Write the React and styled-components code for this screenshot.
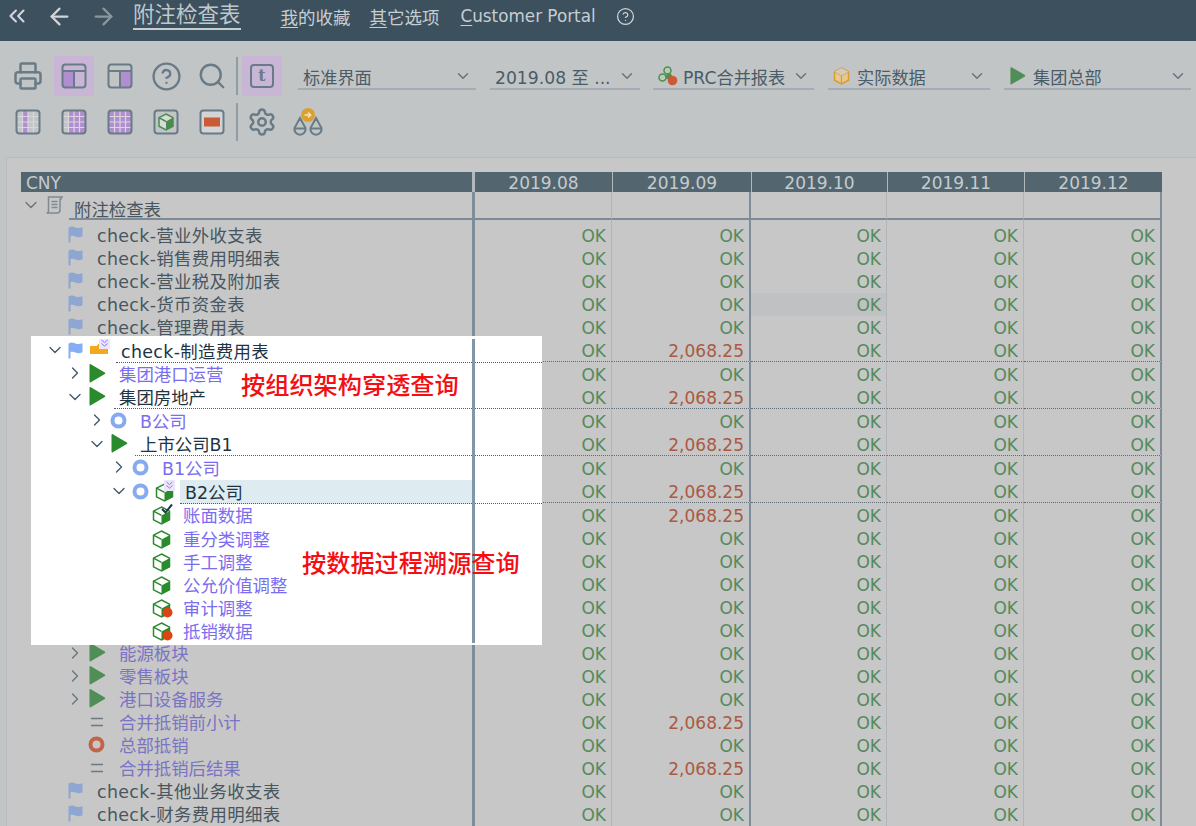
import React from "react";
import styled, { createGlobalStyle } from "styled-components";
import {
  ArrowLeft,
  ArrowRight,
  ChevronDown,
  ChevronRight,
  ChevronsLeft,
  CircleHelp,
  Printer,
  Search,
  Settings,
} from "lucide-react";

const FONT = `"DejaVu Sans", "Noto Sans CJK SC", sans-serif`;
const SLATE = "#687b87";

const GlobalStyle = createGlobalStyle`
  html, body {
    margin: 0;
    height: 100%;
    overflow: hidden;
    background: #c2c5c6;
    font-family: ${FONT};
  }
  * { box-sizing: border-box; }
`;

const Page = styled.div`
  width: 1196px;
  height: 826px;
  overflow: hidden;
  display: flex;
  flex-direction: column;
`;

/* top bar */
const TopBar = styled.div`
  height: 41px;
  flex: none;
  background: #3c505d;
  display: flex;
  align-items: center;
  color: #c6ced2;
  font-size: 17.5px;
  padding: 0 0 9px 4px;
`;

const NavIcon = styled.span`
  display: flex;
  width: ${(p) => p.$w}px;
  color: ${(p) => p.$color || "#cfd5d8"};
`;

const Title = styled.span`
  font-size: 21.5px;
  line-height: 26px;
  margin: 0 40px -4px 0;
  border-bottom: 2px solid #c6ced2;
  color: #bfc8cd;
  transform: translateY(-2px);
`;

const NavLink = styled.span`
  margin-right: ${(p) => p.$gap}px;
  font-size: ${(p) => p.$size || 17.5}px;
  white-space: nowrap;
  u { text-underline-offset: 3px; }
`;

/* toolbar */
const Toolbar = styled.div`
  height: 116px;
  flex: none;
  padding: 15px 0 0 8px;
  display: flex;
  flex-direction: column;
  gap: 6px;
`;

const ToolRow = styled.div`
  display: flex;
  align-items: center;
  gap: 6px;
  height: 40px;
`;

const ToolButton = styled.div`
  width: 40px;
  height: 40px;
  border-radius: 2px;
  display: flex;
  align-items: center;
  justify-content: center;
  color: ${SLATE};
  background: ${(p) => (p.$active ? "#c9b6d6" : "transparent")};
`;

const ToolDivider = styled.div`
  width: 2px;
  height: 38px;
  margin: 0 -2px;
  background: #8f9ca6;
`;

const LetterBox = styled.span`
  width: 24px;
  height: 24px;
  border: 2px solid ${SLATE};
  border-radius: 4px;
  display: flex;
  align-items: center;
  justify-content: center;
  font: bold 16px/1 "DejaVu Serif", serif;
  color: ${SLATE};
`;

const Select = styled.div`
  width: ${(p) => p.$w}px;
  margin-left: ${(p) => p.$ml}px;
  height: 26px;
  align-self: flex-start;
  margin-top: 8px;
  border-bottom: 2px solid #a6abb5;
  display: flex;
  align-items: center;
  padding: 0 4px 0 5px;
  color: #4a5c68;
  font-size: 17.2px;
  white-space: nowrap;
  svg { flex: none; }
`;

const SelectText = styled.span`
  flex: 1;
  margin-left: ${(p) => p.$ml || 0}px;
`;

/* report panel */
const Panel = styled.div`
  flex: 1;
  margin-left: 6px;
  padding: 14px 0 0 14px;
  background: #c7c7c7;
  border-top: 1px solid #b8bcbd;
  border-left: 1px solid #b8bcbd;
`;

const Table = styled.div`
  position: relative;
  width: 1141px;
`;

const GRID = "451px 140px 139px 136px 137px 138px";

const HeadRow = styled.div`
  display: grid;
  grid-template-columns: ${GRID};
  height: 20px;
  background: #536670;
  color: #c5cbce;
  font-size: 17px;
  line-height: 23px;
`;

const HeadCell = styled.div`
  padding-left: ${(p) => (p.$first ? 5 : 0)}px;
  text-align: ${(p) => (p.$first ? "left" : "center")};
  border-left: ${(p) => (p.$first ? "none" : "3px solid #b3b8bc")};
  overflow: hidden;
  & + & + & { border-left-width: 1px; }
`;

const Row = styled.div`
  display: grid;
  grid-template-columns: ${GRID};
  height: ${(p) => p.$h}px;
`;

const TreeCell = styled.div`
  display: flex;
  align-items: stretch;
  padding-left: ${(p) => p.$pad}px;
  color: ${(p) => p.$color};
  font-size: 17.4px;
  line-height: 19px;
  white-space: nowrap;
  min-width: 0;
`;

const Twisty = styled.span`
  width: 20px;
  flex: none;
  display: flex;
  align-items: center;
  padding-bottom: 2px;
  color: ${(p) => (p.$bright ? "#42586a" : "#67767f")};
  svg { margin-left: -3px; }
`;

const Slot = styled.span`
  width: ${(p) => p.$w}px;
  flex: none;
  display: flex;
  align-items: center;
  padding-bottom: 2px;
`;

const Label = styled.span`
  flex: 1;
  display: flex;
  align-items: flex-end;
  padding-left: 5px;
  padding-bottom: ${(p) => (p.$head || p.$open ? 0 : 1)}px;
  line-height: ${(p) => (p.$head ? 15 : 19)}px;
  letter-spacing: ${(p) => (p.$latin ? 0.35 : 0)}px;
  background: ${(p) => (p.$selected ? "#deebf0" : "transparent")};
  border-bottom: ${(p) =>
    p.$head ? "2px solid #7d8a95" : p.$open ? "1px dotted #4c5c6a" : "none"};
`;

const ValueCell = styled.div`
  display: flex;
  align-items: flex-end;
  justify-content: flex-end;
  padding: 0 5px ${(p) => (p.$open ? 0 : 1)}px 0;
  font-size: 17px;
  line-height: 19px;
  color: ${(p) => (p.$alert ? "#aa5a42" : "#558b5c")};
  background: ${(p) => (p.$shade ? "#bfc1c3" : "transparent")};
  border-left: ${(p) => (p.$first ? "3px solid #7d8d99" : "none")};
  border-right: ${(p) => (p.$strong ? "2px solid #7d8d99" : "1px solid #b0b5ba")};
  border-bottom: ${(p) =>
    p.$rule ? "2px solid #7d8a95" : p.$open ? "1px dotted #5e6c78" : "none"};
`;

/* the white call-out over the tree column */
const Callout = styled.div`
  position: absolute;
  top: 164px;
  left: 10px;
  width: 511px;
  height: 309px;
  padding-top: 3px;
  background: #fff;
`;

const CalloutRow = styled.div`
  display: grid;
  grid-template-columns: 441px 3px 1fr;
  height: ${(p) => p.$h}px;
`;

const CalloutBar = styled.div`
  background: #8097a9;
`;

const CalloutRest = styled.div`
  border-bottom: ${(p) => (p.$open ? "1px dotted #4c5c6a" : "none")};
`;

const Note = styled.span`
  position: absolute;
  left: ${(p) => p.$x}px;
  top: ${(p) => p.$y}px;
  color: #f50d12;
  font-size: 24.2px;
  line-height: 30px;
  font-weight: 500;
  white-space: nowrap;
`;

/* drawn icons */
const LayoutIcon = ({ side }) => (
  <svg width="26" height="26" viewBox="0 0 26 26" fill="none">
    <rect x={side === "left" ? 2 : 13} y="8" width="11" height="16" fill="#b18ed0" />
    <rect x="1.5" y="1.5" width="23" height="23" rx="3" stroke={SLATE} strokeWidth="2" />
    <path d="M2 8h22M13 8v16" stroke={SLATE} strokeWidth="2" />
  </svg>
);

const GridIcon = ({ cols }) => (
  <svg width="26" height="26" viewBox="0 0 26 26" fill="none">
    {cols.map((c) => (
      <rect key={c} x={2 + c * 5.5} y="2" width="5.5" height="22" fill="#b18ed0" />
    ))}
    <path d="M7.5 2v22M13 2v22M18.5 2v22M2 7.5h22M2 13h22M2 18.5h22" stroke="#dad6de" strokeWidth="1.2" />
    <rect x="1.5" y="1.5" width="23" height="23" rx="3" stroke={SLATE} strokeWidth="2" />
  </svg>
);

const BoxedCube = () => (
  <svg width="26" height="26" viewBox="0 0 26 26" fill="none">
    <rect x="1.5" y="1.5" width="23" height="23" rx="3" stroke={SLATE} strokeWidth="2" />
    <path d="M13 5l7 3.6v8.6L13 21l-7-3.800V8.600z" fill="#d8dcd8" stroke="#4a8c50" strokeWidth="1.5" />
    <path d="M13 12.500l7-3.900v8.600L13 21z" fill="#4a8c50" />
    <path d="M6 8.600l7 3.900" stroke="#4a8c50" strokeWidth="1.5" />
  </svg>
);

const BoxedBar = () => (
  <svg width="26" height="26" viewBox="0 0 26 26" fill="none">
    <rect x="1.5" y="1.5" width="23" height="23" rx="3" stroke={SLATE} strokeWidth="2" fill="#d2d4d5" />
    <rect x="5" y="8.500" width="16" height="9" fill="#c95b36" />
  </svg>
);

const Scales = () => (
  <svg width="32" height="30" viewBox="0 0 32 30" fill="none">
    <path d="M8 11L2.500 21a5.600 5.600 0 1 0 11 0zM24 11l-5.500 10a5.600 5.600 0 1 0 11 0z" stroke={SLATE} strokeWidth="2" />
    <path d="M2.500 21.500h11M18.500 21.500h11" stroke={SLATE} strokeWidth="2" />
    <circle cx="16" cy="8" r="7" fill="#dba033" />
    <path d="M12.500 8h6M16 5.500L18.700 8 16 10.500" stroke="#f2e3b8" strokeWidth="1.500" />
  </svg>
);

const Flag = ({ bright }) => (
  <svg width="15" height="17" viewBox="0 0 15 17">
    <path
      d="M0.500 1.500c3-1.500 4.500-1 7 0s4.500 0.500 7-0.200v9c-2.500 1-4.500 1.200-7 0.200s-3.500-1-5-0.500V16.500H0.500z"
      fill={bright ? "#86aef6" : "#8ea6d2"}
    />
  </svg>
);

const Play = ({ bright, size = 18 }) => (
  <svg width={size} height={size + 1} viewBox="0 0 18 19">
    <path
      d="M1.500 1c0-.8.700-1.100 1.300-.7l14 8.200c.6.400.6 1.200 0 1.600l-14 8.200c-.6.400-1.300.1-1.300-.7z"
      fill={bright ? "#2a8a2e" : "#4f8e56"}
    />
  </svg>
);

const Ring = ({ color }) => (
  <svg width="17" height="17" viewBox="0 0 17 17">
    <circle cx="8.500" cy="8.500" r="6" fill="none" stroke={color} strokeWidth="4" />
  </svg>
);

const Equals = () => (
  <svg width="16" height="12" viewBox="0 0 16 12">
    <path d="M3 2.500h12M3 9.500h12" stroke="#6c7a85" strokeWidth="1.600" />
  </svg>
);

const Badge = ({ x = 9, y = 0 }) => (
  <g transform={`translate(${x} ${y})`}>
    <rect width="11" height="11" fill="#ebe6fa" />
    <path d="M2.500 2l3 2.600 3-2.600M2.500 5.500l3 2.600 3-2.600" fill="none" stroke="#8a78e8" strokeWidth="1" />
  </g>
);

const Cube = ({ mark, color = "#2a8a2e" }) => (
  <svg width="24" height="22" viewBox="0 0 24 22">
    <path d="M9.500 4l8 4.200v8.600L9.500 21l-8-4.200V8.200z" fill="#fff" stroke={color} strokeWidth="1.500" />
    <path d="M9.500 12.400l8-4.200v8.600L9.500 21z" fill={color} />
    <path d="M1.500 8.200l8 4.200" stroke={color} strokeWidth="1.500" />
    {mark === "badge" && <Badge />}
    {mark === "dot" && <circle cx="15.500" cy="16.500" r="5" fill="#dd4413" />}
    {mark === "check" && <path d="M10 6l3.500 3.500L20 1.500" fill="none" stroke="#203a4a" strokeWidth="2" />}
  </svg>
);

const SmallCube = () => (
  <svg width="17" height="18" viewBox="0 0 17 18">
    <path d="M8.500 1l7 3.800v8.400l-7 3.800-7-3.800V4.800z" fill="#e6c98e" stroke="#d99c30" strokeWidth="1.500" />
    <path d="M1.500 4.800l7 3.800 7-3.800M8.500 8.600V17" fill="none" stroke="#d99c30" strokeWidth="1.200" />
    <path d="M8.500 1l7 3.800-7 3.800-7-3.800z" fill="#cfcbc2" />
  </svg>
);

const Cluster = () => (
  <svg width="20" height="20" viewBox="0 0 20 20">
    <circle cx="9.500" cy="4.500" r="3.500" fill="#b9cdb4" stroke="#4f8e56" strokeWidth="1.500" />
    <circle cx="4.500" cy="11.500" r="3.500" fill="#b9cdb4" stroke="#4f8e56" strokeWidth="1.500" />
    <circle cx="11" cy="10.500" r="3" fill="#4f8e56" />
    <circle cx="14.500" cy="14.500" r="4.800" fill="#c95b36" />
  </svg>
);

const Folder = () => (
  <svg width="24" height="22" viewBox="0 0 24 22">
    <path d="M0 7h7l1-2h10v10H0z" fill="#f4a81c" />
    <Badge y={-1} />
  </svg>
);

const Ledger = () => (
  <svg width="20" height="20" viewBox="0 0 20 20" fill="none" stroke="#7d8a92" strokeWidth="1.500">
    <path d="M5 2h13l-1.500 2.500H16V15a3 3 0 0 1-3 3H2.500a2 2 0 0 0 2-2V2z" />
    <path d="M7.500 6.500h6M7.500 9.500h6M7.500 12.500h6" />
  </svg>
);

const DIM_TEXT = "#47565f";
const DIM_LINK = "#7b73c4";
const BRIGHT_TEXT = "#1d3443";
const BRIGHT_LINK = "#7a6df0";
const DOT_RED = "#c0654a";
const DOT_BLUE = "#86aaf0";

const flagSlot = (
  <Slot $w={24}>
    <Flag />
  </Slot>
);
const playSlot = (
  <Slot $w={26}>
    <Play />
  </Slot>
);
const equalsSlot = (
  <Slot $w={26}>
    <Equals />
  </Slot>
);

const tableRows = [
  { label: "check-营业外收支表", pad: 27, icons: flagSlot },
  { label: "check-销售费用明细表", pad: 27, icons: flagSlot },
  { label: "check-营业税及附加表", pad: 27, icons: flagSlot },
  { label: "check-货币资金表", pad: 27, icons: flagSlot, shade: 2 },
  { label: "check-管理费用表", pad: 27, icons: flagSlot },
  { hidden: true, open: true, amount: true },
  { hidden: true },
  { hidden: true, open: true, amount: true },
  { hidden: true },
  { hidden: true, open: true, amount: true },
  { hidden: true },
  { hidden: true, open: true, amount: true },
  { hidden: true, amount: true },
  { hidden: true },
  { hidden: true },
  { hidden: true },
  { hidden: true },
  { hidden: true },
  { label: "能源板块", pad: 47, icons: playSlot, branch: true, link: true },
  { label: "零售板块", pad: 47, icons: playSlot, branch: true, link: true },
  { label: "港口设备服务", pad: 47, icons: playSlot, branch: true, link: true },
  { label: "合并抵销前小计", pad: 47, link: true, amount: true, icons: equalsSlot },
  {
    label: "总部抵销",
    pad: 47,
    link: true,
    icons: (
      <Slot $w={26}>
        <Ring color={DOT_RED} />
      </Slot>
    ),
  },
  { label: "合并抵销后结果", pad: 47, link: true, amount: true, icons: equalsSlot },
  { label: "check-其他业务收支表", pad: 27, icons: flagSlot },
  { label: "check-财务费用明细表", pad: 27, icons: flagSlot },
];

const blueRing = (
  <Slot $w={25}>
    <Ring color={DOT_BLUE} />
  </Slot>
);
const brightPlay = (w) => (
  <Slot $w={w}>
    <Play bright />
  </Slot>
);
const leaf = (mark) => (
  <Slot $w={26}>
    <Cube mark={mark} />
  </Slot>
);

const calloutRows = [
  {
    label: "check-制造费用表",
    pad: 17,
    twisty: "down",
    open: true,
    icons: (
      <>
        <Slot $w={22}>
          <Flag bright />
        </Slot>
        <Slot $w={26}>
          <Folder />
        </Slot>
      </>
    ),
  },
  { label: "集团港口运营", pad: 37, twisty: "right", link: true, icons: brightPlay(26) },
  { label: "集团房地产", pad: 37, twisty: "down", open: true, icons: brightPlay(26) },
  { label: "B公司", pad: 59, twisty: "right", link: true, icons: blueRing },
  { label: "上市公司B1", pad: 59, twisty: "down", open: true, icons: brightPlay(25) },
  { label: "B1公司", pad: 81, twisty: "right", link: true, icons: blueRing },
  {
    label: "B2公司",
    pad: 81,
    twisty: "down",
    open: true,
    selected: true,
    icons: (
      <>
        <Slot $w={23}>
          <Ring color={DOT_BLUE} />
        </Slot>
        <Slot $w={25}>
          <Cube mark="badge" />
        </Slot>
      </>
    ),
  },
  { label: "账面数据", pad: 101, link: true, icons: leaf("check") },
  { label: "重分类调整", pad: 101, link: true, icons: leaf() },
  { label: "手工调整", pad: 101, link: true, icons: leaf() },
  { label: "公允价值调整", pad: 101, link: true, icons: leaf() },
  { label: "审计调整", pad: 101, link: true, icons: leaf("dot") },
  { label: "抵销数据", pad: 101, link: true, icons: leaf("dot") },
];

const periods = ["2019.08", "2019.09", "2019.10", "2019.11", "2019.12"];

// a row right under an expanded one is a pixel taller
const rowHeight = (rows, i) => (rows[i - 1]?.open ? 24 : 23);
const isCheck = (label) => label.startsWith("check-");

export default function App() {
  return (
    <Page>
      <GlobalStyle />
      <TopBar>
        <NavIcon $w={42}>
          <ChevronsLeft size={26} />
        </NavIcon>
        <NavIcon $w={44}>
          <ArrowLeft size={27} />
        </NavIcon>
        <NavIcon $w={43} $color="#8b979d">
          <ArrowRight size={27} />
        </NavIcon>
        <Title>附注检查表</Title>
        <NavLink $gap={19}>
          <u>我</u>的收藏
        </NavLink>
        <NavLink $gap={21}>
          <u>其</u>它选项
        </NavLink>
        <NavLink $gap={20} $size={16.8}>
          <u>C</u>ustomer Portal
        </NavLink>
        <NavIcon $w={20}>
          <CircleHelp size={19} strokeWidth={1.6} />
        </NavIcon>
      </TopBar>

      <Toolbar>
        <ToolRow>
          <ToolButton>
            <Printer size={30} strokeWidth={2} />
          </ToolButton>
          <ToolButton $active>
            <LayoutIcon side="left" />
          </ToolButton>
          <ToolButton>
            <LayoutIcon side="right" />
          </ToolButton>
          <ToolButton>
            <CircleHelp size={31} strokeWidth={1.8} />
          </ToolButton>
          <ToolButton>
            <Search size={30} strokeWidth={1.9} />
          </ToolButton>
          <ToolDivider />
          <ToolButton $active>
            <LetterBox>t</LetterBox>
          </ToolButton>
          <Select $w={178} $ml={10}>
            <SelectText>标准界面</SelectText>
            <ChevronDown size={18} color="#66757f" />
          </Select>
          <Select $w={150} $ml={8}>
            <SelectText>2019.08 至 ...</SelectText>
            <ChevronDown size={18} color="#66757f" />
          </Select>
          <Select $w={161} $ml={7}>
            <Cluster />
            <SelectText $ml={5}>PRC合并报表</SelectText>
            <ChevronDown size={18} color="#66757f" />
          </Select>
          <Select $w={162} $ml={8}>
            <SmallCube />
            <SelectText $ml={7}>实际数据</SelectText>
            <ChevronDown size={18} color="#66757f" />
          </Select>
          <Select $w={187} $ml={8}>
            <Play size={17} />
            <SelectText $ml={7}>集团总部</SelectText>
            <ChevronDown size={18} color="#66757f" />
          </Select>
        </ToolRow>
        <ToolRow>
          <ToolButton>
            <GridIcon cols={[1]} />
          </ToolButton>
          <ToolButton>
            <GridIcon cols={[1, 2, 3]} />
          </ToolButton>
          <ToolButton>
            <GridIcon cols={[0, 1, 2, 3]} />
          </ToolButton>
          <ToolButton>
            <BoxedCube />
          </ToolButton>
          <ToolButton>
            <BoxedBar />
          </ToolButton>
          <ToolDivider />
          <ToolButton>
            <Settings size={30} strokeWidth={2} />
          </ToolButton>
          <ToolButton>
            <Scales />
          </ToolButton>
        </ToolRow>
      </Toolbar>

      <Panel>
        <Table>
          <HeadRow>
            <HeadCell $first>CNY</HeadCell>
            {periods.map((p) => (
              <HeadCell key={p}>{p}</HeadCell>
            ))}
          </HeadRow>

          <Row $h={28}>
            <TreeCell $pad={3} $color={DIM_TEXT}>
              <Twisty>
                <ChevronDown size={20} strokeWidth={1.6} />
              </Twisty>
              <Slot $w={25}>
                <Ledger />
              </Slot>
              <Label $head>附注检查表</Label>
            </TreeCell>
            {periods.map((p, i) => (
              <ValueCell key={p} $first={i === 0} $strong={i === 1 || i === 4} $rule />
            ))}
          </Row>
          <Row $h={4}>
            <div />
            {periods.map((p, i) => (
              <ValueCell key={p} $first={i === 0} $strong={i === 1 || i === 4} />
            ))}
          </Row>

          {tableRows.map((row, r) => (
            <Row key={r} $h={rowHeight(tableRows, r)}>
              {row.hidden ? (
                <div />
              ) : (
                <TreeCell $pad={row.pad} $color={row.link ? DIM_LINK : DIM_TEXT}>
                  <Twisty>{row.branch && <ChevronRight size={20} strokeWidth={1.6} />}</Twisty>
                  {row.icons}
                  <Label $latin={isCheck(row.label)}>{row.label}</Label>
                </TreeCell>
              )}
              {periods.map((p, i) => (
                <ValueCell
                  key={p}
                  $first={i === 0}
                  $strong={i === 1 || i === 4}
                  $open={row.open}
                  $shade={row.shade === i}
                  $alert={row.amount && i === 1}
                >
                  {row.amount && i === 1 ? "2,068.25" : "OK"}
                </ValueCell>
              ))}
            </Row>
          ))}

          <Callout>
            {calloutRows.map((row, r) => (
              <CalloutRow key={row.label} $h={rowHeight(calloutRows, r)}>
                <TreeCell $pad={row.pad} $color={row.link ? BRIGHT_LINK : BRIGHT_TEXT}>
                  <Twisty $bright>
                    {row.twisty === "down" && <ChevronDown size={20} strokeWidth={1.6} />}
                    {row.twisty === "right" && <ChevronRight size={20} strokeWidth={1.6} />}
                  </Twisty>
                  {row.icons}
                  <Label $latin={isCheck(row.label)} $selected={row.selected} $open={row.open}>
                    {row.label}
                  </Label>
                </TreeCell>
                <CalloutBar />
                <CalloutRest $open={row.open} />
              </CalloutRow>
            ))}
            <Note $x={210} $y={35}>
              按组织架构穿透查询
            </Note>
            <Note $x={271} $y={213}>
              按数据过程溯源查询
            </Note>
          </Callout>
        </Table>
      </Panel>
    </Page>
  );
}
